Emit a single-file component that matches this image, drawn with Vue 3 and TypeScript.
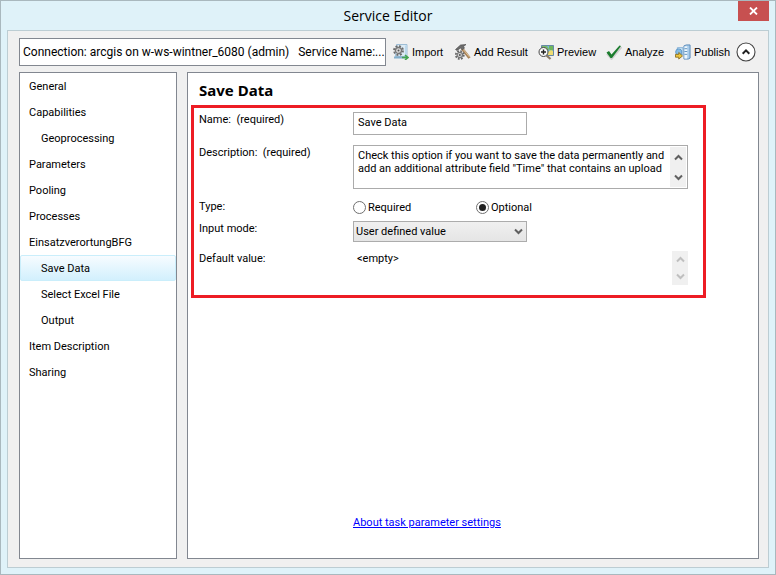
<script setup lang="ts">
import { ref } from 'vue'

interface NavItem {
  label: string
  nested?: boolean
}

const items: NavItem[] = [
  { label: 'General' },
  { label: 'Capabilities' },
  { label: 'Geoprocessing', nested: true },
  { label: 'Parameters' },
  { label: 'Pooling' },
  { label: 'Processes' },
  { label: 'EinsatzverortungBFG' },
  { label: 'Save Data', nested: true },
  { label: 'Select Excel File', nested: true },
  { label: 'Output', nested: true },
  { label: 'Item Description' },
  { label: 'Sharing' },
]

const selected = ref('Save Data')
const name = ref('Save Data')
const description = ref(
  'Check this option if you want to save the data permanently and\nadd an additional attribute field "Time" that contains an upload',
)
const kind = ref('optional')
const mode = ref('User defined value')
</script>

<template>
  <div class="window">
    <header class="titlebar">
      <h1 class="title">Service Editor</h1>
      <button class="close" type="button" aria-label="Close">
        <svg width="9" height="8" viewBox="0 0 9 8"><path d="M1 .5 8 7.5M8 .5 1 7.5" stroke="#fff" stroke-width="1.8" /></svg>
      </button>
    </header>

    <div class="client">
      <div class="toolbar">
        <div class="connection">
          <span>Connection: arcgis on w-ws-wintner_6080 (admin)</span>
          <span>Service Name:...</span>
        </div>
        <button class="tool import" type="button">
          <svg width="16" height="16" viewBox="0 0 16 16">
            <path d="M3.500 .5h10.500v12H2.500z" fill="#dcebf5" stroke="#9dbdd5" />
            <path d="M12 1.500h1.500v10H12z" fill="#bad8ed" />
            <circle cx="5.500" cy="6.500" r="4.500" fill="none" stroke="#6a6a6a" stroke-width="1.800" stroke-dasharray="2 1.530" />
            <circle cx="5.500" cy="6.500" r="3" fill="#ddd" stroke="#777" stroke-width="1.300" />
            <circle cx="5.500" cy="6.500" r="1" fill="#555" />
            <path d="M1 13.500h12" stroke="#82aecb" stroke-width="2" />
            <path d="M9 13.500h5M12 11l3 2.500-3 2.500" fill="none" stroke="#45a650" stroke-width="1.600" />
          </svg>
          <span>Import</span>
        </button>
        <button class="tool result" type="button">
          <svg width="16" height="16" viewBox="0 0 16 16">
            <path d="M7 4.500 14.500 14" stroke="#a98256" stroke-width="2.800" />
            <path d="M7.500 4.500 14.500 13" stroke="#dec39b" stroke-width="1" />
            <path d="M.5 5.500 5.500 1 11 .5 8.500 2.500 9.500 4 7.500 6 5.500 4 2 6.500z" fill="#6c6c6c" stroke="#444" stroke-width=".6" />
            <circle cx="4.800" cy="11" r="4" fill="none" stroke="#666" stroke-width="1.700" stroke-dasharray="1.800 1.340" />
            <circle cx="4.800" cy="11" r="2.700" fill="#d5d5d5" stroke="#777" stroke-width="1.200" />
            <circle cx="4.800" cy="11" r="1" fill="#555" />
          </svg>
          <span>Add Result</span>
        </button>
        <button class="tool preview" type="button">
          <svg width="16" height="16" viewBox="0 0 16 16">
            <path d="M3.500 1.500h12v10h-12z" fill="#75b6df" stroke="#6789a5" />
            <path d="M4 2h5l2 3-3 6H4z" fill="#75b968" />
            <path d="M11 2h4v4l-2 1-2-2z" fill="#6fb65c" />
            <path d="M10 8l3-2 2 1v4h-5z" fill="#efdc72" />
            <path d="m8.500 11.500 4 3.500" stroke="#8b7a63" stroke-width="2.200" />
            <circle cx="5.500" cy="8" r="4.500" fill="#f8f8f8" stroke="#474747" />
            <path d="M5.500 5.500v5M3 8h5" stroke="#222" stroke-width="1.400" />
          </svg>
          <span>Preview</span>
        </button>
        <button class="tool analyze" type="button">
          <svg width="16" height="16" viewBox="0 0 16 16">
            <path d="M1 9.500 5.500 15 15.500 3" fill="none" stroke="#cfcfcf" stroke-width="2" />
            <path d="M.5 8.500 3 7l2.500 3.500L13.500 1.500 15 2 6 14H4.500z" fill="#1b7c2e" />
          </svg>
          <span>Analyze</span>
        </button>
        <button class="tool publish" type="button">
          <svg width="16" height="16" viewBox="0 0 17 16">
            <path d="M9.500 1.500 12 .5h4v14l-2 1H9.500z" fill="#a9cdec" stroke="#5588b7" />
            <path d="M10 2h3v13h-3z" fill="#eef7fd" />
            <path d="M10 4.500h3M10 7.500h3M10 10.500h3" stroke="#5a8fbc" />
            <path d="M2.500 3.500h6v7h-6z" fill="#d8edfa" stroke="#79a9d1" />
            <circle cx="4" cy="8" r="3.300" fill="#85bce5" stroke="#5f98c7" />
            <path d="M.5 10.500H4V8.500l4 3.700L4 15.500v-2H.5z" fill="#ecc63f" stroke="#85681b" stroke-width=".9" />
          </svg>
          <span>Publish</span>
        </button>
        <button class="collapse" type="button" aria-label="Collapse toolbar">
          <svg width="20" height="20" viewBox="0 0 20 20">
            <circle cx="10" cy="10" r="9" fill="#fff" stroke="#444" stroke-width="1.100" />
            <path d="m6.700 11.700 3.300-3.300 3.300 3.300" fill="none" stroke="#222" stroke-width="2" />
          </svg>
        </button>
      </div>

      <div class="panes">
        <nav class="nav" aria-label="Service settings">
          <button
            v-for="item in items"
            :key="item.label"
            type="button"
            class="nav-item"
            :class="{ nested: item.nested, selected: item.label === selected }"
            @click="selected = item.label"
          >
            {{ item.label }}
          </button>
        </nav>

        <main class="content">
          <h2 class="heading">Save Data</h2>
          <form class="fields" @submit.prevent>
            <label class="label" for="name">Name:&nbsp; (required)</label>
            <input id="name" v-model="name" class="text" type="text" />

            <label class="label" for="description">Description:&nbsp; (required)</label>
            <div class="area">
              <textarea id="description" v-model="description" wrap="off" />
              <div class="scroll">
                <button type="button" aria-label="Scroll up">
                  <svg width="9" height="7" viewBox="0 0 9 7"><path d="M1 5.500 4.500 2 8 5.500" /></svg>
                </button>
                <button type="button" aria-label="Scroll down">
                  <svg width="9" height="7" viewBox="0 0 9 7"><path d="M1 1.500 4.500 5 8 1.500" /></svg>
                </button>
              </div>
            </div>

            <span id="type-label" class="label">Type:</span>
            <div class="radios" role="radiogroup" aria-labelledby="type-label">
              <label class="radio"><input v-model="kind" type="radio" name="kind" value="required" />Required</label>
              <label class="radio"><input v-model="kind" type="radio" name="kind" value="optional" />Optional</label>
            </div>

            <label class="label" for="mode">Input mode:</label>
            <div class="combo">
              <select id="mode" v-model="mode">
                <option>User defined value</option>
              </select>
              <svg width="9" height="7" viewBox="0 0 9 7"><path d="M1 1.500 4.500 5 8 1.500" /></svg>
            </div>

            <span class="label">Default value:</span>
            <div class="default">
              <span>&lt;empty&gt;</span>
              <div class="scroll">
                <button type="button" disabled aria-label="Previous line">
                  <svg width="9" height="7" viewBox="0 0 9 7"><path d="M1 5.500 4.500 2 8 5.500" /></svg>
                </button>
                <button type="button" disabled aria-label="Next line">
                  <svg width="9" height="7" viewBox="0 0 9 7"><path d="M1 1.500 4.500 5 8 1.500" /></svg>
                </button>
              </div>
            </div>
          </form>
          <a class="about" href="#">About task parameter settings</a>
        </main>
      </div>
    </div>
  </div>
</template>

<style>
body {
  margin: 0;
}
</style>

<style scoped>
* {
  box-sizing: border-box;
}

.window {
  display: flex;
  flex-direction: column;
  min-height: 100vh;
  padding: 0 6px 6px;
  border: 1px solid #a9b8be;
  background: #dff2f9;
  color: #000;
  font: 11px/13px Roboto, sans-serif;
}

button,
input,
select,
textarea {
  margin: 0;
  color: inherit;
  font: inherit;
}

button {
  padding: 0;
  border: 0;
  background: none;
}

svg {
  display: block;
  flex: none;
}

.titlebar {
  display: grid;
  grid-template-columns: 31px 1fr 31px;
  height: 29px;
}

.title {
  grid-column: 2;
  margin: 0;
  font: 400 14px/30px "Open Sans", sans-serif;
  text-align: center;
}

.close {
  display: flex;
  align-items: center;
  justify-content: center;
  height: 20px;
  background: #c75050;
}

.client {
  display: flex;
  flex: 1;
  flex-direction: column;
  gap: 6px;
  padding: 7px 9px 8px 11px;
  border: 1px solid #bccdd3;
  background: #f0f0f0;
}

.toolbar {
  display: flex;
  align-items: center;
  height: 28px;
}

.connection {
  display: flex;
  flex: 1;
  gap: 9px;
  align-items: center;
  height: 28px;
  margin-right: 7px;
  padding: 0 3px;
  overflow: hidden;
  border: 1px solid #828790;
  background: #fff;
  font: 12px/16px Roboto, sans-serif;
  white-space: nowrap;
}

.tool {
  display: flex;
  gap: 3px;
  align-items: center;
  font: 11px/16px "Liberation Sans", sans-serif;
  white-space: nowrap;
}

.import {
  width: 62px;
}

.result {
  width: 83px;
}

.preview {
  width: 68px;
}

.analyze {
  width: 69px;
}

.publish {
  width: 61px;
}

.collapse {
  margin-right: 3px;
}

.panes {
  display: flex;
  flex: 1;
  gap: 10px;
}

.nav {
  display: flex;
  flex: none;
  flex-direction: column;
  width: 158px;
  border: 1px solid #828790;
  background: #fff;
}

.nav-item {
  height: 26px;
  padding-left: 8px;
  border: 1px solid transparent;
  border-radius: 2px;
  text-align: left;
}

.nested {
  padding-left: 20px;
}

.selected {
  border-color: #caeefb;
  background: linear-gradient(#f7fcff, #d2f0fd);
}

.content {
  display: flex;
  flex: 1;
  flex-direction: column;
  align-items: flex-start;
  padding: 7px 3px 29px;
  border: 1px solid #828790;
  background: #fff;
}

.heading {
  margin: 0 0 5px;
  padding-left: 8px;
  font: 700 15px/20px "Noto Sans", sans-serif;
}

.fields {
  display: grid;
  grid-template-columns: 154px 335px;
  grid-template-rows: 33px 54px 22px 30px 34px;
  padding: 4px 15px 10px 5px;
  border: 3px solid #ed1c24;
}

.label {
  padding-top: 1px;
}

.text {
  width: 174px;
  height: 23px;
  padding: 0 4px 2px;
  border: 1px solid #ababab;
  background: #fff;
}

.area {
  display: flex;
  height: 44px;
  padding: 1px;
  border: 1px solid #ababab;
}

.area textarea {
  flex: 1;
  min-width: 0;
  padding: 2px 0 2px 3px;
  overflow: hidden;
  border: 0;
  outline: 0;
  background: none;
  resize: none;
}

.scroll {
  display: flex;
  flex: none;
  flex-direction: column;
  width: 16px;
  background: #f0f0f0;
}

.scroll button {
  display: flex;
  flex: 1;
  align-items: center;
  justify-content: center;
}

.scroll path,
.combo path {
  fill: none;
  stroke: #606060;
  stroke-width: 2;
}

.scroll button:disabled path {
  stroke: #bfbfbf;
}

.radios {
  display: grid;
  grid-template-columns: 123px 1fr;
  align-items: start;
}

.radio {
  display: flex;
  gap: 2px;
  align-items: center;
  height: 16px;
}

.radio input {
  display: grid;
  width: 13px;
  height: 13px;
  place-items: center;
  border: 1px solid #707070;
  border-radius: 50%;
  background: #fff;
  appearance: none;
}

.radio input:checked::before {
  width: 7px;
  height: 7px;
  border-radius: 50%;
  background: #222;
  content: "";
}

.combo {
  display: grid;
  align-items: center;
  width: 174px;
  height: 21px;
}

.combo select,
.combo svg {
  grid-area: 1 / 1;
}

.combo select {
  width: 100%;
  height: 21px;
  padding: 0 20px 0 2px;
  border: 1px solid #acacac;
  border-radius: 0;
  background: linear-gradient(#f0f0f0, #e5e5e5);
  appearance: none;
}

.combo svg {
  justify-self: end;
  margin-right: 4px;
  pointer-events: none;
}

.default {
  display: flex;
  justify-content: space-between;
  padding-left: 4px;
}

.default > span {
  padding-top: 1px;
}

.about {
  margin-top: auto;
  margin-left: 162px;
  color: #00f;
}
</style>
